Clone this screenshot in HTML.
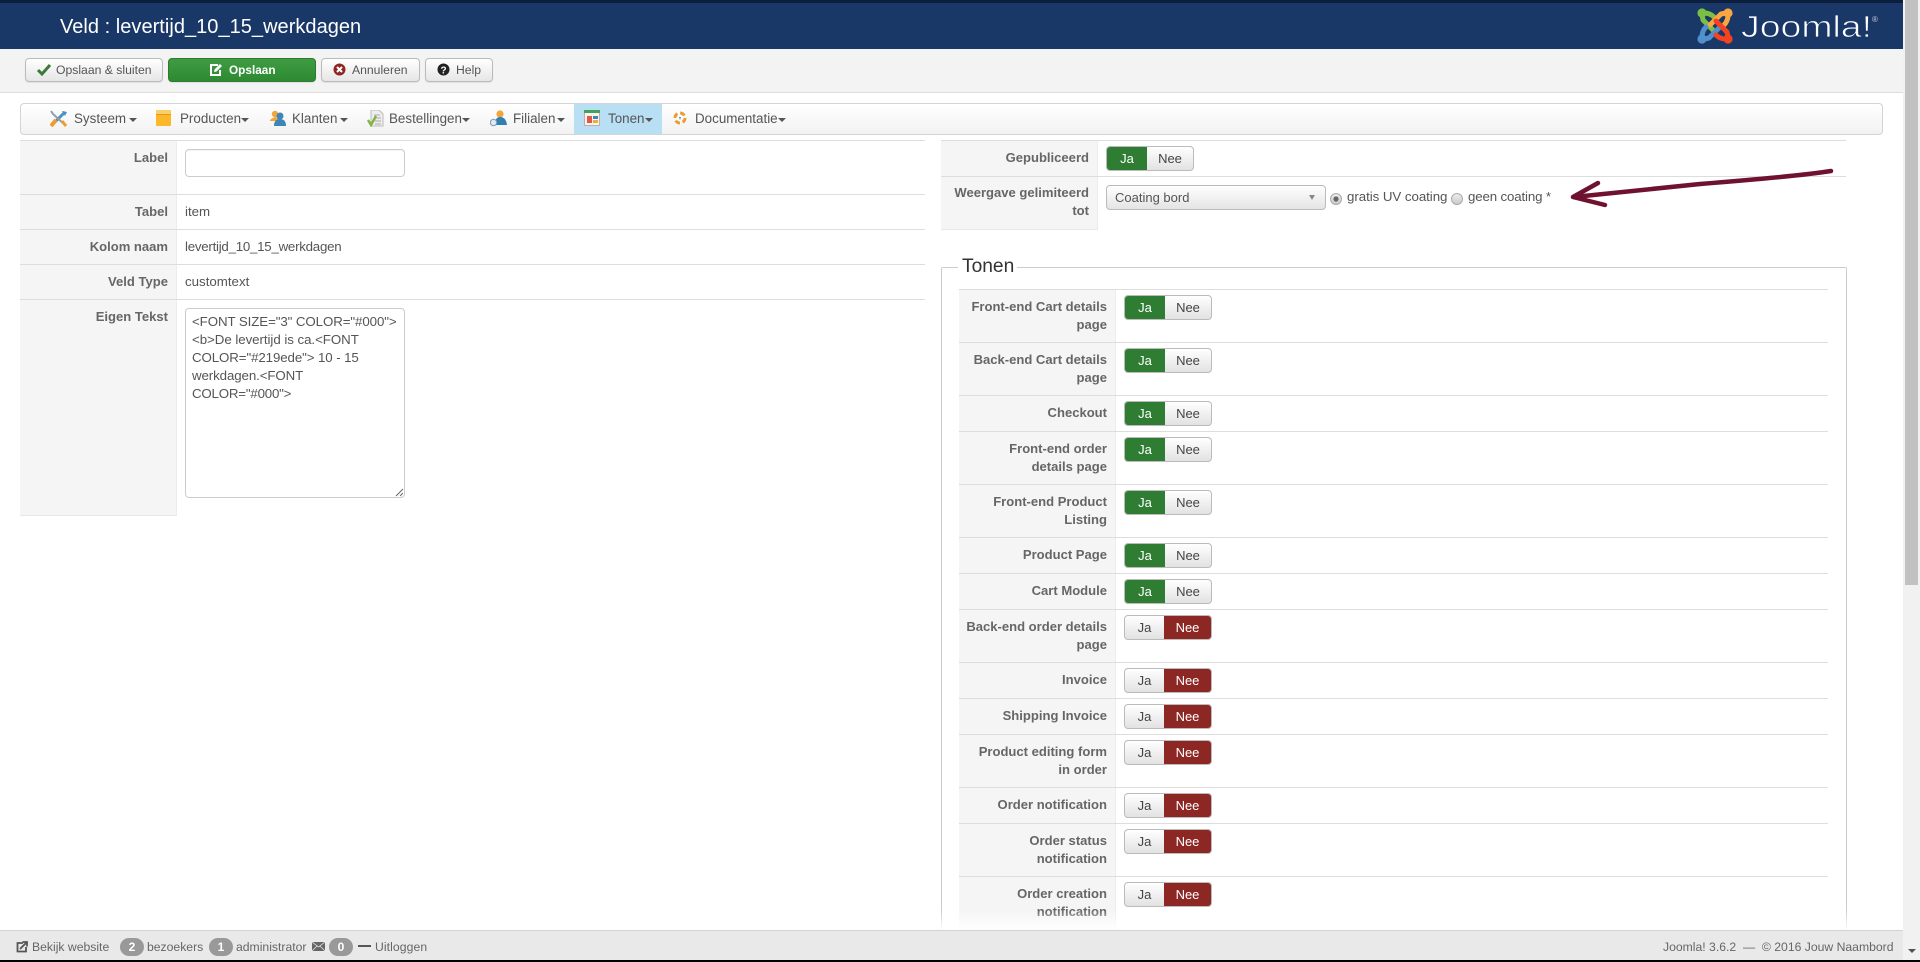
<!DOCTYPE html>
<html lang="nl">
<head>
<meta charset="utf-8">
<title>Veld : levertijd_10_15_werkdagen</title>
<style>
html,body{margin:0;padding:0;width:1920px;height:962px;overflow:hidden;background:#fff;font-family:"Liberation Sans",Arial,sans-serif;color:#555}
*{box-sizing:border-box}
.a{position:absolute}
.t{position:absolute;white-space:nowrap;line-height:18px;font-size:13.3px}
.l{position:absolute;white-space:nowrap;line-height:18px;font-size:13.05px;font-weight:bold;color:#666;text-align:right}
.btn{position:absolute;top:58px;height:24px;border:1px solid #bbb;border-radius:4px;background:linear-gradient(#fff,#e6e6e6);box-shadow:0 1px 1px rgba(0,0,0,.08)}
.bt{position:absolute;top:61px;white-space:nowrap;font-size:12.2px;line-height:19px;color:#555}
.n{position:absolute;top:110px;white-space:nowrap;font-size:13.4px;line-height:18px;color:#555}
.c{position:absolute;top:118px;width:0;height:0;border-left:4px solid transparent;border-right:4px solid transparent;border-top:4px solid #555}
.th{position:absolute;left:959px;width:157px;background:#f5f5f5;border-right:1px solid #ececec}
.hr{position:absolute;height:1px;background:#ddd}
.tg{position:absolute;height:25px;border:1px solid #bbb;border-radius:4px;background:linear-gradient(#fff,#e2e2e2);overflow:hidden;font-size:13px;line-height:23px;text-align:center;color:#444}
.tg b,.tg i{position:absolute;top:0;bottom:0;font-style:normal;font-weight:normal}
.on{background:#2f7d33;color:#fff}
.off{background:#8d2724;color:#fff}
.f{position:absolute;top:938px;white-space:nowrap;font-size:12.2px;line-height:18px;color:#666}
.bd{position:absolute;top:938px;width:24px;height:18px;border-radius:9px;background:#999;color:#fff;font-weight:bold;font-size:12px;line-height:18px;text-align:center}
</style>
</head>
<body>

<!-- header -->
<div class="a" style="left:0;top:0;width:1903px;height:49px;background:#1a3867"></div>
<div class="a" style="left:0;top:0;width:1903px;height:3px;background:#0c1e3d"></div>
<div class="a" style="left:60px;top:14px;font-size:20px;line-height:26px;color:#fff;white-space:nowrap;letter-spacing:.03px">Veld : levertijd_10_15_werkdagen</div>

<!-- logo -->
<svg class="a" style="left:1690px;top:3px" width="213" height="46" viewBox="1690 3 213 46">
<defs>
<g id="limb" fill="none" stroke-width="5" stroke-linecap="round" stroke-linejoin="round">
<path d="M1702 15 L1703 20 L1714 31"/>
<path d="M1704 13 Q1710 13 1714 17"/>
</g>
</defs>
<g stroke="#7ac143" fill="#7ac143"><circle cx="1702" cy="13" r="4.6" stroke="none"/><use href="#limb"/></g>
<g transform="rotate(90 1715 26)" stroke="#f9a541" fill="#f9a541"><circle cx="1702" cy="13" r="4.6" stroke="none"/><use href="#limb"/></g>
<g transform="rotate(270 1715 26)" stroke="#5091cd" fill="#5091cd"><circle cx="1702" cy="13" r="4.6" stroke="none"/><use href="#limb"/></g>
<g transform="rotate(180 1715 26)" stroke="#f44321" fill="#f44321"><circle cx="1702" cy="13" r="4.6" stroke="none"/><use href="#limb"/></g>
<text x="1741" y="37" font-family="Liberation Sans" font-size="31" fill="#fff" stroke="#1a3867" stroke-width=".8" textLength="131" lengthAdjust="spacingAndGlyphs">Joomla!</text>
<text x="1872" y="22" font-family="Liberation Sans" font-size="8" fill="#ccd">®</text>
</svg>

<!-- toolbar -->
<div class="a" style="left:0;top:49px;width:1903px;height:44px;background:#f3f3f3;border-bottom:1px solid #ddd"></div>

<div class="btn" style="left:25px;width:138px"></div>
<svg class="a" style="left:36px;top:63px" width="16" height="13" viewBox="0 0 16 13"><path d="M2 7 L6 11 L14 2" fill="none" stroke="#3c7a3a" stroke-width="3"/></svg>
<div class="bt" style="left:56px">Opslaan &amp; sluiten</div>

<div class="btn" style="left:168px;width:148px;background:linear-gradient(#3f9c42,#2d8a32);border-color:#2b7a2f"></div>
<svg class="a" style="left:209px;top:63px" width="14" height="13" viewBox="0 0 14 13"><path d="M9 2 H2 V12 H11 V7" fill="none" stroke="#fff" stroke-width="2"/><path d="M5 9 L5.5 6.5 L11 1 L13 3 L7.5 8.5 Z" fill="#fff"/></svg>
<div class="bt" style="left:229px;color:#fff;font-weight:bold;font-size:11.8px">Opslaan</div>

<div class="btn" style="left:321px;width:99px"></div>
<svg class="a" style="left:333px;top:63px" width="13" height="13" viewBox="0 0 13 13"><circle cx="6.5" cy="6.5" r="6" fill="#8e2623"/><path d="M4 4 L9 9 M9 4 L4 9" stroke="#fff" stroke-width="2"/></svg>
<div class="bt" style="left:352px">Annuleren</div>

<div class="btn" style="left:425px;width:68px"></div>
<svg class="a" style="left:437px;top:63px" width="13" height="13" viewBox="0 0 13 13"><circle cx="6.5" cy="6.5" r="6" fill="#222"/><text x="6.5" y="10.3" font-family="Liberation Sans" font-weight="bold" font-size="10" fill="#fff" text-anchor="middle">?</text></svg>
<div class="bt" style="left:456px">Help</div>

<!-- nav -->
<div class="a" style="left:20px;top:103px;width:1863px;height:32px;border:1px solid #d4d4d4;border-radius:4px;background:linear-gradient(#fff,#f2f2f2)"></div>
<div class="a" style="left:574px;top:104px;width:88px;height:30px;background:#b9dff5"></div>

<svg class="a" style="left:50px;top:110px" width="18" height="17" viewBox="0 0 18 17"><path d="M2 15 L15 2" stroke="#4a90c2" stroke-width="3"/><path d="M1 1 L3 4 L15 15" stroke="#8aa0ae" stroke-width="2" fill="none"/><path d="M1 16 L6 10" stroke="#f39a2b" stroke-width="4"/><path d="M12 1 L17 2 L15 6 Z" fill="#4a90c2"/><path d="M12 11 L16 16" stroke="#f39a2b" stroke-width="3"/></svg>
<div class="n" style="left:74px">Systeem</div><div class="c" style="left:129px"></div>

<svg class="a" style="left:156px;top:110px" width="16" height="16" viewBox="0 0 16 16"><rect x="0" y="0" width="15" height="16" rx="1" fill="#fcb72b"/><rect x="0" y="0" width="15" height="4" fill="#f9cf6c"/><rect x="0" y="4" width="15" height="1" fill="#e79a17"/></svg>
<div class="n" style="left:180px">Producten</div><div class="c" style="left:241px"></div>

<svg class="a" style="left:269px;top:110px" width="17" height="16" viewBox="0 0 17 16"><circle cx="6" cy="4" r="3.2" fill="#f5a33b"/><path d="M1 10 Q6 5 10 9 V11 H1 Z" fill="#f5a33b"/><circle cx="11" cy="6" r="3.5" fill="#3e86b8"/><path d="M5 16 Q5 9 11 9 Q17 9 17 16 Z" fill="#3e86b8"/></svg>
<div class="n" style="left:292px">Klanten</div><div class="c" style="left:340px"></div>

<svg class="a" style="left:367px;top:110px" width="17" height="17" viewBox="0 0 17 17"><path d="M4 0 H12 L16 4 V16 H4 Z" fill="#eee" stroke="#bbb"/><path d="M7 5 H13 M7 8 H14 M8 11 H14 M8 14 H14" stroke="#aaa"/><path d="M1 10 L4 15 L9 6" fill="none" stroke="#7fb53c" stroke-width="2.4"/></svg>
<div class="n" style="left:389px">Bestellingen</div><div class="c" style="left:462px"></div>

<svg class="a" style="left:490px;top:110px" width="17" height="17" viewBox="0 0 17 17"><circle cx="10" cy="4" r="3.6" fill="#f5a33b"/><path d="M5 15 Q5 7 10 7 Q16 7 17 15 Z" fill="#2f7fb0"/><circle cx="3.5" cy="12.5" r="3.2" fill="#dfeaf2" stroke="#7f9db2"/></svg>
<div class="n" style="left:513px">Filialen</div><div class="c" style="left:557px"></div>

<svg class="a" style="left:584px;top:110px" width="16" height="16" viewBox="0 0 16 16"><rect x=".5" y="1.5" width="15" height="14" fill="#f5f3ee" stroke="#c9a8a0"/><rect x="0" y="0" width="16" height="3" fill="#3fa35a"/><rect x="3" y="6" width="5" height="7" fill="#e2574c"/><rect x="9" y="6" width="5" height="3" fill="#3e86b8"/><rect x="9" y="10" width="5" height="3" fill="#e8b23a"/></svg>
<div class="n" style="left:608px">Tonen</div><div class="c" style="left:645px"></div>

<svg class="a" style="left:673px;top:111px" width="14" height="14" viewBox="0 0 14 14"><circle cx="7" cy="7" r="5" fill="none" stroke="#ed9a2f" stroke-width="3" stroke-dasharray="5 2.85"/><path d="M6 6 H8 L7 9 Z" fill="#4a90c2"/></svg>
<div class="n" style="left:695px">Documentatie</div><div class="c" style="left:778px"></div>

<!-- left table -->
<div class="a" style="left:20px;top:140px;width:157px;height:375px;background:#f5f5f5;border-right:1px solid #ececec"></div>
<div class="hr" style="left:20px;top:140px;width:905px"></div>
<div class="hr" style="left:20px;top:194px;width:905px"></div>
<div class="hr" style="left:20px;top:229px;width:905px"></div>
<div class="hr" style="left:20px;top:264px;width:905px"></div>
<div class="hr" style="left:20px;top:299px;width:905px"></div>
<div class="hr" style="left:20px;top:515px;width:157px;background:#e8e8e8"></div>

<div class="l" style="right:1752px;top:149px">Label</div>
<div class="l" style="right:1752px;top:203px">Tabel</div>
<div class="l" style="right:1752px;top:238px">Kolom naam</div>
<div class="l" style="right:1752px;top:273px">Veld Type</div>
<div class="l" style="right:1752px;top:308px">Eigen Tekst</div>

<div class="a" style="left:185px;top:149px;width:220px;height:28px;border:1px solid #ccc;border-radius:4px;background:#fff;box-shadow:inset 0 1px 1px rgba(0,0,0,.05)"></div>
<div class="t" style="left:185px;top:203px">item</div>
<div class="t" style="left:185px;top:238px;letter-spacing:-.25px">levertijd_10_15_werkdagen</div>
<div class="t" style="left:185px;top:273px">customtext</div>

<div class="a" style="left:185px;top:308px;width:220px;height:190px;border:1px solid #ccc;border-radius:4px;background:#fff"></div>
<div class="t" style="left:192px;top:313px;letter-spacing:-.09px">&lt;FONT SIZE="3" COLOR="#000"&gt;</div>
<div class="t" style="left:192px;top:331px;letter-spacing:-.05px">&lt;b&gt;De levertijd is ca.&lt;FONT</div>
<div class="t" style="left:192px;top:349px;letter-spacing:-.1px">COLOR="#219ede"&gt; 10 - 15</div>
<div class="t" style="left:192px;top:367px;letter-spacing:-.1px">werkdagen.&lt;FONT</div>
<div class="t" style="left:192px;top:385px;letter-spacing:-.2px">COLOR="#000"&gt;</div>
<svg class="a" style="left:395px;top:488px" width="9" height="9" viewBox="0 0 9 9"><path d="M1 8 L8 1 M5 8 L8 5" stroke="#666" stroke-width="1"/></svg>

<!-- right top table -->
<div class="a" style="left:941px;top:140px;width:157px;height:90px;background:#f5f5f5;border-right:1px solid #ececec"></div>
<div class="hr" style="left:941px;top:140px;width:905px"></div>
<div class="hr" style="left:941px;top:176px;width:905px"></div>
<div class="hr" style="left:941px;top:229px;width:157px;background:#e8e8e8"></div>
<div class="l" style="right:831px;top:149px">Gepubliceerd</div>
<div class="l" style="right:831px;top:184px">Weergave gelimiteerd</div>
<div class="l" style="right:831px;top:202px">tot</div>

<div class="tg" style="left:1106px;top:146px;width:88px"><b class="on" style="left:0;width:40px">Ja</b><i style="left:40px;right:0">Nee</i></div>

<div class="a" style="left:1106px;top:185px;width:220px;height:25px;border:1px solid #bbb;border-radius:4px;background:linear-gradient(#fff,#e4e4e4)"></div>
<div class="t" style="left:1115px;top:189px;font-size:13px">Coating bord</div>
<div class="a" style="left:1309px;top:195px;width:0;height:0;border-left:3.5px solid transparent;border-right:3.5px solid transparent;border-top:5px solid #888"></div>

<svg class="a" style="left:1329px;top:192px" width="14" height="14" viewBox="0 0 14 14"><defs><linearGradient id="rg" x1="0" y1="0" x2="0" y2="1"><stop offset="0" stop-color="#eee"/><stop offset="1" stop-color="#c9c9c9"/></linearGradient></defs><circle cx="7" cy="7" r="5.5" fill="url(#rg)" stroke="#aaa"/><circle cx="7" cy="7" r="2.6" fill="#666"/></svg>
<div class="t" style="left:1347px;top:188px;letter-spacing:-.05px">gratis UV coating</div>
<svg class="a" style="left:1450px;top:192px" width="14" height="14" viewBox="0 0 14 14"><circle cx="7" cy="7" r="5.5" fill="url(#rg)" stroke="#aaa"/></svg>
<div class="t" style="left:1468px;top:188px;letter-spacing:-.15px">geen coating *</div>

<!-- arrow -->
<svg class="a" style="left:1560px;top:165px" width="280" height="50" viewBox="1560 165 280 50">
<path d="M1831 171 Q1800 176 1700 184 Q1630 191 1574 197" fill="none" stroke="#6e1230" stroke-width="4.5" stroke-linecap="round"/>
<path d="M1598 183 L1573 197 L1605 205" fill="none" stroke="#6e1230" stroke-width="4.5" stroke-linecap="round" stroke-linejoin="round"/>
</svg>

<!-- fieldset -->
<div class="a" style="left:941px;top:267px;width:906px;height:680px;border:1px solid #ccc;border-radius:2px"></div>
<div class="a" style="left:958px;top:258px;width:59px;height:20px;background:#fff"></div>
<div class="a" style="left:962px;top:254px;font-size:19.2px;line-height:26px;color:#333;white-space:nowrap">Tonen</div>

<div class="th" style="top:289px;height:641px"></div>
<div class="hr" style="left:959px;top:289px;width:869px"></div>
<div class="hr" style="left:959px;top:342px;width:869px"></div>
<div class="hr" style="left:959px;top:395px;width:869px"></div>
<div class="hr" style="left:959px;top:431px;width:869px"></div>
<div class="hr" style="left:959px;top:484px;width:869px"></div>
<div class="hr" style="left:959px;top:537px;width:869px"></div>
<div class="hr" style="left:959px;top:573px;width:869px"></div>
<div class="hr" style="left:959px;top:609px;width:869px"></div>
<div class="hr" style="left:959px;top:662px;width:869px"></div>
<div class="hr" style="left:959px;top:698px;width:869px"></div>
<div class="hr" style="left:959px;top:734px;width:869px"></div>
<div class="hr" style="left:959px;top:787px;width:869px"></div>
<div class="hr" style="left:959px;top:823px;width:869px"></div>
<div class="hr" style="left:959px;top:876px;width:869px"></div>

<div class="l" style="right:813px;top:298px">Front-end Cart details</div><div class="l" style="right:813px;top:316px">page</div>
<div class="l" style="right:813px;top:351px">Back-end Cart details</div><div class="l" style="right:813px;top:369px">page</div>
<div class="l" style="right:813px;top:404px">Checkout</div>
<div class="l" style="right:813px;top:440px">Front-end order</div><div class="l" style="right:813px;top:458px">details page</div>
<div class="l" style="right:813px;top:493px">Front-end Product</div><div class="l" style="right:813px;top:511px">Listing</div>
<div class="l" style="right:813px;top:546px">Product Page</div>
<div class="l" style="right:813px;top:582px">Cart Module</div>
<div class="l" style="right:813px;top:618px">Back-end order details</div><div class="l" style="right:813px;top:636px">page</div>
<div class="l" style="right:813px;top:671px">Invoice</div>
<div class="l" style="right:813px;top:707px">Shipping Invoice</div>
<div class="l" style="right:813px;top:743px">Product editing form</div><div class="l" style="right:813px;top:761px">in order</div>
<div class="l" style="right:813px;top:796px">Order notification</div>
<div class="l" style="right:813px;top:832px">Order status</div><div class="l" style="right:813px;top:850px">notification</div>
<div class="l" style="right:813px;top:885px">Order creation</div><div class="l" style="right:813px;top:903px">notification</div>

<div class="tg" style="left:1124px;top:295px;width:88px"><b class="on" style="left:0;width:40px">Ja</b><i style="left:40px;right:0">Nee</i></div>
<div class="tg" style="left:1124px;top:348px;width:88px"><b class="on" style="left:0;width:40px">Ja</b><i style="left:40px;right:0">Nee</i></div>
<div class="tg" style="left:1124px;top:401px;width:88px"><b class="on" style="left:0;width:40px">Ja</b><i style="left:40px;right:0">Nee</i></div>
<div class="tg" style="left:1124px;top:437px;width:88px"><b class="on" style="left:0;width:40px">Ja</b><i style="left:40px;right:0">Nee</i></div>
<div class="tg" style="left:1124px;top:490px;width:88px"><b class="on" style="left:0;width:40px">Ja</b><i style="left:40px;right:0">Nee</i></div>
<div class="tg" style="left:1124px;top:543px;width:88px"><b class="on" style="left:0;width:40px">Ja</b><i style="left:40px;right:0">Nee</i></div>
<div class="tg" style="left:1124px;top:579px;width:88px"><b class="on" style="left:0;width:40px">Ja</b><i style="left:40px;right:0">Nee</i></div>
<div class="tg" style="left:1124px;top:615px;width:88px"><i style="left:0;width:39px">Ja</i><b class="off" style="left:39px;right:0">Nee</b></div>
<div class="tg" style="left:1124px;top:668px;width:88px"><i style="left:0;width:39px">Ja</i><b class="off" style="left:39px;right:0">Nee</b></div>
<div class="tg" style="left:1124px;top:704px;width:88px"><i style="left:0;width:39px">Ja</i><b class="off" style="left:39px;right:0">Nee</b></div>
<div class="tg" style="left:1124px;top:740px;width:88px"><i style="left:0;width:39px">Ja</i><b class="off" style="left:39px;right:0">Nee</b></div>
<div class="tg" style="left:1124px;top:793px;width:88px"><i style="left:0;width:39px">Ja</i><b class="off" style="left:39px;right:0">Nee</b></div>
<div class="tg" style="left:1124px;top:829px;width:88px"><i style="left:0;width:39px">Ja</i><b class="off" style="left:39px;right:0">Nee</b></div>
<div class="tg" style="left:1124px;top:882px;width:88px"><i style="left:0;width:39px">Ja</i><b class="off" style="left:39px;right:0">Nee</b></div>

<!-- fade -->
<div class="a" style="left:0;top:910px;width:1903px;height:20px;background:linear-gradient(rgba(255,255,255,0),rgba(255,255,255,.95))"></div>

<!-- footer -->
<div class="a" style="left:0;top:930px;width:1903px;height:30px;background:#e9e9e9;border-top:1px solid #d2d2d2"></div>
<svg class="a" style="left:16px;top:941px" width="12" height="12" viewBox="0 0 12 12"><path d="M7 2 H1.5 V10.5 H10 V6" fill="none" stroke="#555" stroke-width="1.8"/><path d="M4 8 L10 2 M6.5 1 H11 V5.5" fill="none" stroke="#555" stroke-width="1.8"/></svg>
<div class="f" style="left:32px">Bekijk website</div>
<div class="bd" style="left:120px">2</div>
<div class="f" style="left:147px">bezoekers</div>
<div class="bd" style="left:209px">1</div>
<div class="f" style="left:236px">administrator</div>
<svg class="a" style="left:312px;top:942px" width="13" height="9" viewBox="0 0 13 9"><rect width="13" height="9" fill="#666"/><path d="M0 0 L6.5 5 L13 0 M0 9 L5 4 M13 9 L8 4" stroke="#ddd" stroke-width=".8" fill="none"/></svg>
<div class="bd" style="left:329px">0</div>
<div class="a" style="left:358px;top:945px;width:13px;height:2px;background:#555"></div>
<div class="f" style="left:375px;letter-spacing:.08px">Uitloggen</div>
<div class="f" style="left:1663px">Joomla! 3.6.2 &nbsp;— &nbsp;© 2016 Jouw Naambord</div>

<!-- scrollbar -->
<div class="a" style="left:1903px;top:0;width:17px;height:960px;background:#f1f1f1"></div>
<div class="a" style="left:1905px;top:0;width:13px;height:585px;background:#c1c1c1"></div>
<div class="a" style="left:1908px;top:949px;width:0;height:0;border-left:4px solid transparent;border-right:4px solid transparent;border-top:4px solid #505050"></div>
<div class="a" style="left:0;top:960px;width:1920px;height:2px;background:#000"></div>

</body>
</html>
